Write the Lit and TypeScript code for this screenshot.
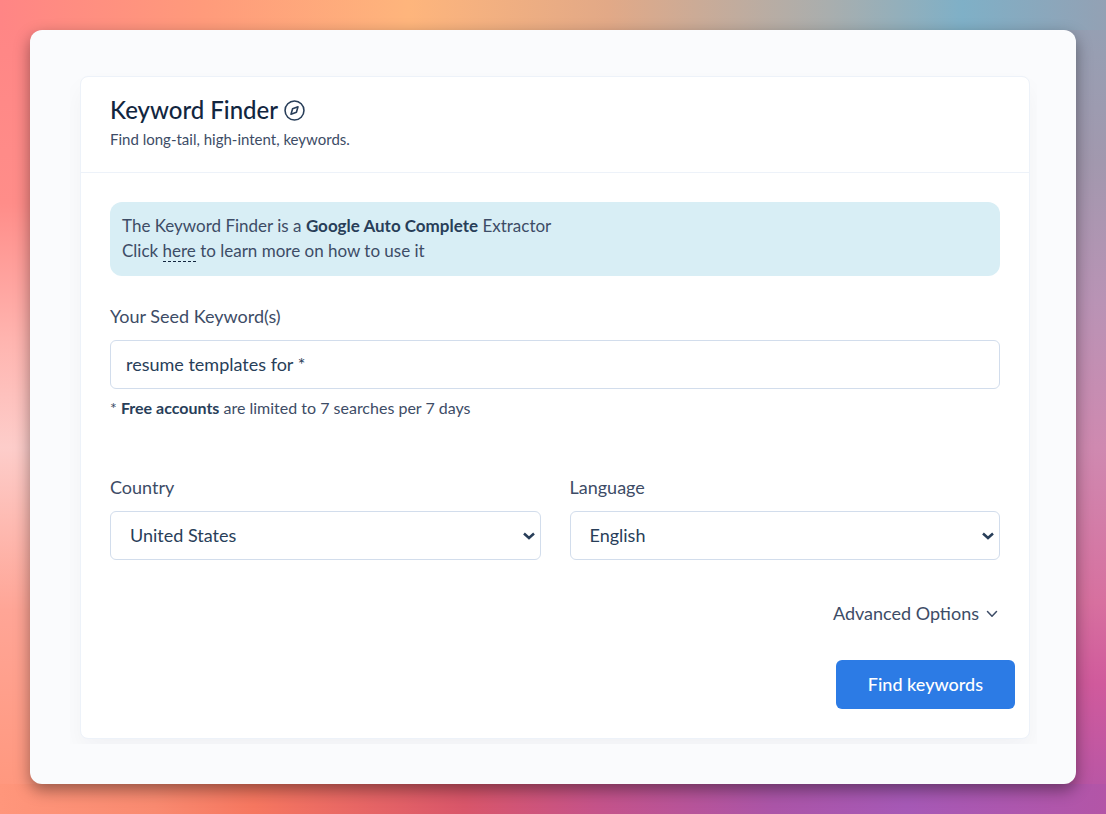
import { LitElement, html, css } from "lit";
import { customElement, state } from "lit/decorators.js";

@customElement("app-root")
export class AppRoot extends LitElement {
  static styles = css`
    :host {
      display: block;
      min-height: 100vh;
      font-family: Lato, "Liberation Sans", sans-serif;
      font-size: 18px;
      color: #3d4c66;
      background:
        linear-gradient(90deg, #ff8585, #ff9a7b 18%, #feb57c 37%, #e2a987 55%, #a9aeae 75%, #7fb0c7 87%, #93a1b4) top / 100% 30px no-repeat,
        linear-gradient(90deg, #ff967b, #f98a70 14%, #f67760 23%, #d9566a 42%, #c5538a 54%, #ab55a8 70%, #a659b6 82%, #b355a7) bottom / 100% 30px no-repeat,
        linear-gradient(180deg, #ff8585, #ff8d89 25%, #ffb5b0 42%, #fdcdca 55%, #ffa596 75%, #ff967b) left / 50% 100% no-repeat,
        linear-gradient(180deg, #93a1b4, #a298ae 20%, #b993b5 37%, #cf89b0 55%, #d7709f 74%, #d05a9c 84%, #b355a7) right / 50% 100% no-repeat;
    }
    * { box-sizing: border-box; }
    .stage { display: flex; min-height: 100vh; padding: 30px; }
    .panel {
      flex: 1;
      padding: 46px 46px 45px 50px;
      border-radius: 12px;
      background: #fafbfd;
      box-shadow: 0 6px 16px rgba(0, 0, 0, 0.4);
    }
    .card {
      background: #fff;
      border: 1px solid #edf2f9;
      border-radius: 8px;
      box-shadow: 0 12px 24px rgba(18, 38, 63, 0.04);
      clip-path: inset(-10px -7px -5px -10px);
    }
    .head { padding: 18px 29px 22px; border-bottom: 1px solid #edf2f9; }
    h1 {
      display: flex;
      align-items: center;
      gap: 6px;
      margin: 0;
      font-size: 24px;
      line-height: 30px;
      font-weight: 500;
      color: #12263f;
    }
    .compass { width: 21px; height: 21px; color: #283e59; }
    .sub { margin: 4px 0 0; font-size: 15px; line-height: 21px; }
    .body { padding: 29px; }
    .note {
      padding: 11px 12px 13px;
      border-radius: 12px;
      background: #d8eef5;
      font-size: 17px;
      line-height: 25px;
    }
    .note p { margin: 0; }
    b { color: #283e59; }
    a { color: inherit; text-decoration: none; border-bottom: 1px dashed #12263f; }
    label { display: block; line-height: 26px; margin-bottom: 11px; }
    .seed { margin-top: 27px; }
    input, select {
      display: block;
      width: 100%;
      height: 49px;
      border: 1px solid #d2ddec;
      border-radius: 6px;
      background: #fff;
      color: #283e59;
      font: inherit;
    }
    input { padding: 0 15px 1px; }
    select { padding: 0 30px 1px 19px; appearance: none; }
    .pick { display: grid; align-items: center; }
    .pick > * { grid-area: 1 / 1; }
    .arrow {
      width: 12px;
      height: 8px;
      margin-right: 6px;
      justify-self: end;
      color: #283e59;
      pointer-events: none;
    }
    .hint { margin: 7px 0 0; font-size: 16px; line-height: 24px; }
    .row { display: grid; grid-template-columns: 1fr 1fr; gap: 29px; margin-top: 54px; }
    .more {
      display: flex;
      align-items: center;
      gap: 7px;
      margin: 40px 2px 0 auto;
      padding: 0;
      border: 0;
      background: none;
      color: #3d4c66;
      font: inherit;
      line-height: 27px;
    }
    .chev { width: 12px; height: 8px; }
    .find {
      display: block;
      margin: 33px -15px 0 auto;
      padding: 0 32px 2px;
      height: 49px;
      border: 0;
      border-radius: 6px;
      background: #2c7be5;
      color: #fff;
      font: inherit;
      font-weight: 500;
    }
  `;

  @state() private seed = "resume templates for *";

  private picker(id: string, label: string, value: string) {
    return html`
      <div>
        <label for=${id}>${label}</label>
        <div class="pick">
          <select id=${id}><option>${value}</option></select>
          <svg class="arrow" viewBox="0 0 12 8" fill="none" stroke="currentColor" stroke-width="2.500" aria-hidden="true">
            <path d="M1 1.500L6 6l5-4.500" />
          </svg>
        </div>
      </div>
    `;
  }

  render() {
    return html`
      <main class="stage">
        <div class="panel">
          <section class="card">
            <header class="head">
              <h1>
                Keyword Finder
                <svg class="compass" viewBox="0 0 24 24" fill="none" stroke="currentColor" stroke-width="1.800" stroke-linecap="round" stroke-linejoin="round" aria-hidden="true">
                  <circle cx="12" cy="12" r="10.800" />
                  <path d="M16 7.800l-1.800 6.200-6.200 2.200 1.800-6.200z" />
                </svg>
              </h1>
              <p class="sub">Find long-tail, high-intent, keywords.</p>
            </header>
            <div class="body">
              <div class="note">
                <p>The Keyword Finder is a <b>Google Auto Complete</b> Extractor</p>
                <p>Click <a href="#">here</a> to learn more on how to use it</p>
              </div>
              <div class="seed">
                <label for="seed">Your Seed Keyword(s)</label>
                <input id="seed" type="text" .value=${this.seed} />
                <p class="hint">* <b>Free accounts</b> are limited to 7 searches per 7 days</p>
              </div>
              <div class="row">
                ${this.picker("country", "Country", "United States")}
                ${this.picker("language", "Language", "English")}
              </div>
              <button class="more" type="button">
                Advanced Options
                <svg class="chev" viewBox="0 0 12 8" fill="none" stroke="currentColor" stroke-width="1.500" stroke-linecap="round" stroke-linejoin="round" aria-hidden="true">
                  <path d="M1.500 1.500L6 6.200l4.500-4.700" />
                </svg>
              </button>
              <button class="find" type="button">Find keywords</button>
            </div>
          </section>
        </div>
      </main>
    `;
  }
}
